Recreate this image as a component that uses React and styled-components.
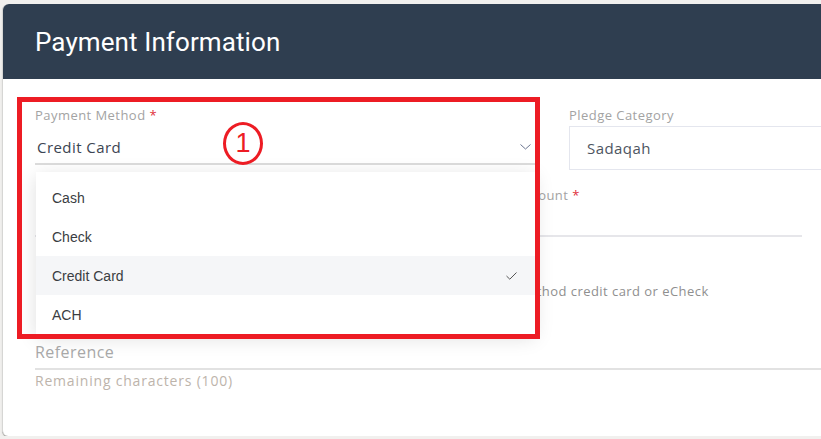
import React from 'react'
import styled, { createGlobalStyle } from 'styled-components'

const GlobalStyle = createGlobalStyle`
  html, body {
    margin: 0;
    padding: 0;
    background: #f1f0ee;
    overflow: hidden;
  }
  body {
    font-family: "Open Sans", "Liberation Sans", sans-serif;
    letter-spacing: 0.45px;
  }
`

const Card = styled.div`
  margin: 4px 0 0 2px;
  width: 840px;
  height: 432px;
  background: #fff;
  border-radius: 6px;
  border-left: 1px solid #d6d6d4;
  box-shadow: 0 1px 0 #a9a9a6, 0 2px 2px rgba(0, 0, 0, 0.08);
  position: relative;
`

const Header = styled.div`
  height: 75px;
  background: #2f3e50;
  border-radius: 6px 6px 0 0;
  display: flex;
  align-items: center;
  padding-left: 32px;
  h2 {
    margin: 0;
    font-family: Roboto, "Liberation Sans", sans-serif;
    font-weight: 400;
    font-size: 26px;
    letter-spacing: 0.1px;
    color: #fff;
  }
`

const Body = styled.div`
  padding: 27px 0 0 32px;
`

const TopRow = styled.div`
  display: grid;
  grid-template-columns: 500px 1fr;
  column-gap: 34px;
  align-items: start;
`

const Field = styled.div`
  position: relative;
`

const Label = styled.div`
  font-size: 13px;
  line-height: 18px;
  color: #a3a3a3;
  span {
    color: #e0303a;
  }
`

const SelectBox = styled.div`
  display: flex;
  align-items: center;
  justify-content: space-between;
  padding: 13px 4px 6px 2px;
  line-height: 20px;
  font-size: 15px;
  color: #3b4552;
  border-bottom: 2px solid #dcdcdc;
`

const BoxInput = styled.div`
  margin-top: 2px;
  height: 44px;
  box-sizing: border-box;
  border: 1px solid #e4e6ee;
  border-right: none;
  display: flex;
  align-items: center;
  padding-left: 17px;
  font-size: 15px;
  color: #4d5561;
`

const SecondRow = styled.div`
  display: grid;
  grid-template-columns: 448px 285px;
  column-gap: 34px;
  margin-top: 16px;
`

const LineInput = styled.div`
  height: ${p => (p.$bare ? 49 : 31)}px;
  border-bottom: 2px solid #e6e6ea;
`

const Note = styled.div`
  margin: 45px 0 0 421px;
  font-size: 13px;
  line-height: 18px;
  letter-spacing: 0.45px;
  color: #8f8f8f;
`

const RefField = styled.div`
  margin-top: 41px;
  border-bottom: 2px solid #e2e2e2;
  font-size: 16px;
  line-height: 22px;
  color: #a9a9a9;
  padding-bottom: 5px;
`

const Hint = styled.div`
  margin-top: 3px;
  font-size: 14px;
  line-height: 16px;
  letter-spacing: 0.8px;
  color: #bdb4ab;
`

const Menu = styled.ul`
  position: absolute;
  left: 1px;
  top: 66px;
  width: 499px;
  margin: 0;
  padding: 6px 0 0;
  list-style: none;
  background: #fff;
  box-shadow: 0 4px 18px rgba(0, 0, 0, 0.13);
  z-index: 5;
`

const MenuItem = styled.li`
  height: 39px;
  display: flex;
  align-items: center;
  justify-content: space-between;
  padding: 0 18px 0 16px;
  font-family: "Liberation Sans", Arial, sans-serif;
  font-size: 14px;
  letter-spacing: 0;
  color: #3a3d42;
  background: ${p => (p.$active ? '#f5f6f8' : '#fff')};
`

const Highlight = styled.div`
  position: absolute;
  left: -18px;
  top: -9px;
  width: 523px;
  height: 242px;
  box-sizing: border-box;
  border: 5px solid #ed1c24;
  z-index: 6;
  pointer-events: none;
`

const Step = styled.div`
  position: absolute;
  left: 188px;
  top: 16px;
  width: 40px;
  height: 43px;
  box-sizing: border-box;
  border: 3px solid #ed1c24;
  border-radius: 50%;
  display: flex;
  align-items: center;
  justify-content: center;
  font-family: "Liberation Sans", Arial, sans-serif;
  font-size: 27px;
  letter-spacing: 0;
  color: #ed1c24;
  z-index: 7;
`

const Chevron = () => (
  <svg width="11" height="6" viewBox="0 0 11 6">
    <path d="M0.5 0.5 L5.5 5 L10.5 0.5" fill="none" stroke="#6b7590" strokeWidth="1" />
  </svg>
)

const Check = () => (
  <svg width="11" height="8" viewBox="0 0 11 8">
    <path d="M0.5 4 L3.8 7.2 L10.5 0.5" fill="none" stroke="#555" strokeWidth="1" />
  </svg>
)

const OPTIONS = ['Cash', 'Check', 'Credit Card', 'ACH']

export default function App() {
  const selected = 'Credit Card'
  return (
    <>
      <GlobalStyle />
      <Card>
        <Header>
          <h2>Payment Information</h2>
        </Header>
        <Body>
          <TopRow>
            <Field>
              <Label>Payment Method <span>*</span></Label>
              <SelectBox>
                {selected}
                <Chevron />
              </SelectBox>
              <Menu>
                {OPTIONS.map(o => (
                  <MenuItem key={o} $active={o === selected}>
                    {o}
                    {o === selected && <Check />}
                  </MenuItem>
                ))}
              </Menu>
              <Highlight />
              <Step>1</Step>
            </Field>
            <Field>
              <Label>Pledge Category</Label>
              <BoxInput>Sadaqah</BoxInput>
            </Field>
          </TopRow>
          <SecondRow>
            <Field>
              <LineInput $bare />
            </Field>
            <Field>
              <Label>Amount <span>*</span></Label>
              <LineInput />
            </Field>
          </SecondRow>
          <Note>Payment method credit card or eCheck</Note>
          <RefField>Reference</RefField>
          <Hint>Remaining characters (100)</Hint>
        </Body>
      </Card>
    </>
  )
}
